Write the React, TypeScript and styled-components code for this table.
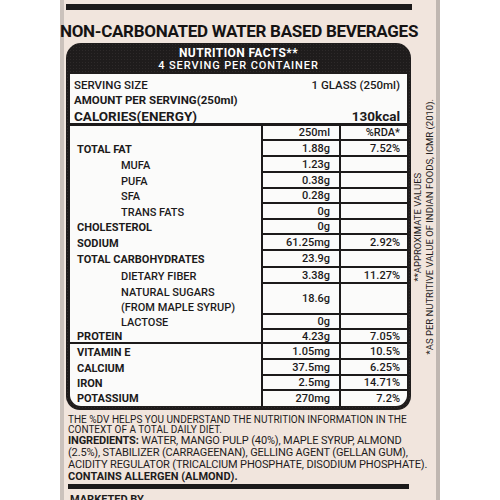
import React from 'react';
import styled, { createGlobalStyle } from 'styled-components';

const INK = '#1c1a1a';

const GlobalStyle = createGlobalStyle`
  html, body { margin: 0; padding: 0; background: #ffffff; }
  body { font-family: Roboto, "Liberation Sans", sans-serif; color: ${INK}; }
  * { box-sizing: border-box; }
`;

const Page = styled.div`
  width: 500px;
  height: 500px;
  overflow: hidden;
  padding-left: 60px;
  background: #ffffff;
`;

const Panel = styled.div`
  width: 380px;
  height: 500px;
  background: #f1e5dd;
  border-left: 4px solid #cbc2bc;
  border-right: 4px solid #c0b7b1;
  padding: 4px 0 0 2px;
  display: flex;
  flex-direction: column;
  align-items: flex-start;
`;

/* Title band: the thick black rule above belongs to it as a top border */
const Title = styled.h1`
  flex: 0 0 auto;
  display: flex;
  justify-content: center;
  margin: 0;
  width: 346px;
  height: 37px;
  padding-top: 11px;
  border-top: 6px solid ${INK};
  font: 700 17px/20px Roboto, "Liberation Sans", sans-serif;
  letter-spacing: -0.3px;
  white-space: nowrap;
  color: #151313;
`;

const Middle = styled.div`
  flex: 0 0 auto;
  display: flex;
  width: 370px;
  margin-top: 2px;
`;

const FactsBox = styled.div`
  width: 345px;
  flex-shrink: 0;
  background-color: #1f1c1c;
  background-image: radial-gradient(#2e2a2a 0.7px, transparent 0.9px);
  background-size: 3px 3px;
  border-radius: 15px 15px 14px 14px;
  padding: 0 4px 4px 4px;
`;

const FactsHeader = styled.div`
  height: 31px;
  padding-top: 4px;
  color: #ffffff;
  text-align: center;
`;

const HeaderTitle = styled.div`
  font: 700 12px/13px Roboto, sans-serif;
  letter-spacing: 0.4px;
`;

const HeaderSub = styled.div`
  font: 500 11px/12px Roboto, sans-serif;
  letter-spacing: 0.9px;
`;

const FactsBody = styled.div`
  background: #fbfbfa;
  border-radius: 0 0 11px 11px;
  overflow: hidden;
`;

const Serving = styled.div`
  height: 52px;
  padding: 3px 7px 0 4px;
  border-bottom: 3px solid ${INK};
`;

const ServingLine = styled.div<{ $h: number; $size: number; $bold?: boolean }>`
  display: flex;
  justify-content: space-between;
  align-items: center;
  height: ${p => p.$h}px;
  font-size: ${p => p.$size}px;
  font-weight: ${p => (p.$bold ? 700 : 500)};
  white-space: nowrap;
`;

const Grid = styled.div`
  display: grid;
  grid-template-columns: 193px 78px 1fr;
`;

const LabelCell = styled.div<{ $h: number; $bold?: boolean; $indent?: boolean; $rule?: boolean }>`
  height: ${p => p.$h}px;
  border-right: 2px solid ${INK};
  border-bottom: ${p => (p.$rule ? `2px solid ${INK}` : 'none')};
  padding-left: ${p => (p.$indent ? 51 : 7)}px;
  display: flex;
  align-items: center;
  font-size: 11px;
  line-height: 15px;
  font-weight: ${p => (p.$bold ? 700 : 500)};
  white-space: nowrap;
`;

const ValueCell = styled.div<{ $h: number; $last?: boolean; $mid?: boolean; $pr: number }>`
  height: ${p => p.$h}px;
  border-bottom: ${p => (p.$last ? 'none' : `2px solid ${INK}`)};
  border-right: ${p => (p.$mid ? `2px solid ${INK}` : 'none')};
  padding-right: ${p => p.$pr}px;
  display: flex;
  align-items: center;
  justify-content: flex-end;
  font-size: 11px;
  font-weight: 500;
  line-height: 15px;
  white-space: nowrap;
`;

const Side = styled.div`
  flex: 1;
  display: flex;
  align-items: center;
  justify-content: center;
  padding-left: 1px;
`;

const SideNotes = styled.div`
  writing-mode: vertical-rl;
  transform: rotate(180deg);
  font: 400 9.5px/12px "Liberation Sans Narrow", Roboto, sans-serif;
  text-align: center;
  white-space: nowrap;
  color: #1e1c1c;
`;

const Notes = styled.div`
  flex: 0 0 auto;
  width: 362px;
  margin: 5px 0 0 2px;
  font-family: "Liberation Sans Narrow", Roboto, sans-serif;
  color: #1e1c1c;
`;

const DvText = styled.p`
  margin: 0;
  font-size: 10px;
  line-height: 10px;
  white-space: nowrap;
`;

const Ingredients = styled.p`
  margin: 0;
  font-size: 11px;
  line-height: 12px;
  letter-spacing: -0.15px;
  white-space: nowrap;
`;

/* last ingredient line carries the black rule beneath it */
const Allergen = styled.p`
  margin: 0;
  width: 341px;
  height: 18px;
  font: 700 11px/12px "Liberation Sans Narrow", Roboto, sans-serif;
  white-space: nowrap;
  border-bottom: 5px solid ${INK};
`;

const Strong = styled.b`
  font-weight: 700;
`;

const Marketed = styled.div`
  margin: 5px 0 0 2px;
  font: 700 11px/12px "Liberation Sans Narrow", Roboto, sans-serif;
`;

type Row = { label: string; v1: string; v2: string; h: number; bold?: boolean; indent?: boolean; rule?: boolean };

const rows: Row[] = [
  { label: '', v1: '250ml', v2: '%RDA*', h: 15 },
  { label: 'TOTAL FAT', v1: '1.88g', v2: '7.52%', h: 16, bold: true },
  { label: 'MUFA', v1: '1.23g', v2: '', h: 16, indent: true },
  { label: 'PUFA', v1: '0.38g', v2: '', h: 16, indent: true },
  { label: 'SFA', v1: '0.28g', v2: '', h: 15, indent: true },
  { label: 'TRANS FATS', v1: '0g', v2: '', h: 16, indent: true },
  { label: 'CHOLESTEROL', v1: '0g', v2: '', h: 15, bold: true },
  { label: 'SODIUM', v1: '61.25mg', v2: '2.92%', h: 16, bold: true },
  { label: 'TOTAL CARBOHYDRATES', v1: '23.9g', v2: '', h: 17, bold: true },
  { label: 'DIETARY FIBER', v1: '3.38g', v2: '11.27%', h: 16, indent: true },
  { label: 'NATURAL SUGARS\n(FROM MAPLE SYRUP)', v1: '18.6g', v2: '', h: 31, indent: true },
  { label: 'LACTOSE', v1: '0g', v2: '', h: 15, indent: true },
  { label: 'PROTEIN', v1: '4.23g', v2: '7.05%', h: 14, bold: true, rule: true },
  { label: 'VITAMIN E', v1: '1.05mg', v2: '10.5%', h: 16, bold: true },
  { label: 'CALCIUM', v1: '37.5mg', v2: '6.25%', h: 16, bold: true },
  { label: 'IRON', v1: '2.5mg', v2: '14.71%', h: 15, bold: true },
  { label: 'POTASSIUM', v1: '270mg', v2: '7.2%', h: 15, bold: true },
];

const LabelText = styled.span`
  white-space: pre-line;
`;

export default function App() {
  return (
    <Page>
      <GlobalStyle />
      <Panel>
        <Title>NON-CARBONATED WATER BASED BEVERAGES</Title>
        <Middle>
          <FactsBox>
            <FactsHeader>
              <HeaderTitle>NUTRITION FACTS**</HeaderTitle>
              <HeaderSub>4 SERVING PER CONTAINER</HeaderSub>
            </FactsHeader>
            <FactsBody>
              <Serving>
                <ServingLine $h={15} $size={11.5}>
                  <span>SERVING SIZE</span>
                  <span>1 GLASS (250ml)</span>
                </ServingLine>
                <ServingLine $h={16} $size={11.5} $bold>
                  <span>AMOUNT PER SERVING(250ml)</span>
                </ServingLine>
                <ServingLine $h={15} $size={13.5} $bold>
                  <span>CALORIES(ENERGY)</span>
                  <span>130kcal</span>
                </ServingLine>
              </Serving>
              <Grid>
                {rows.map((r, i) => {
                  const last = i === rows.length - 1;
                  return (
                    <React.Fragment key={i}>
                      <LabelCell $h={r.h} $bold={r.bold} $indent={r.indent} $rule={r.rule}>
                        <LabelText>{r.label}</LabelText>
                      </LabelCell>
                      <ValueCell $h={r.h} $last={last} $mid $pr={9}>{r.v1}</ValueCell>
                      <ValueCell $h={r.h} $last={last} $pr={7}>{r.v2}</ValueCell>
                    </React.Fragment>
                  );
                })}
              </Grid>
            </FactsBody>
          </FactsBox>
          <Side>
            <SideNotes>
              **APPROXIMATE VALUES
              <br />
              *AS PER NUTRITIVE VALUE OF INDIAN FOODS, ICMR (2010).
            </SideNotes>
          </Side>
        </Middle>
        <Notes>
          <DvText>THE %DV HELPS YOU UNDERSTAND THE NUTRITION INFORMATION IN THE</DvText>
          <DvText>CONTEXT OF A TOTAL DAILY DIET.</DvText>
          <Ingredients>
            <Strong>INGREDIENTS:</Strong> WATER, MANGO PULP (40%), MAPLE SYRUP, ALMOND
          </Ingredients>
          <Ingredients>(2.5%), STABILIZER (CARRAGEENAN), GELLING AGENT (GELLAN GUM),</Ingredients>
          <Ingredients>ACIDITY REGULATOR (TRICALCIUM PHOSPHATE, DISODIUM PHOSPHATE).</Ingredients>
          <Allergen>CONTAINS ALLERGEN (ALMOND).</Allergen>
          <Marketed>MARKETED BY</Marketed>
        </Notes>
      </Panel>
    </Page>
  );
}
